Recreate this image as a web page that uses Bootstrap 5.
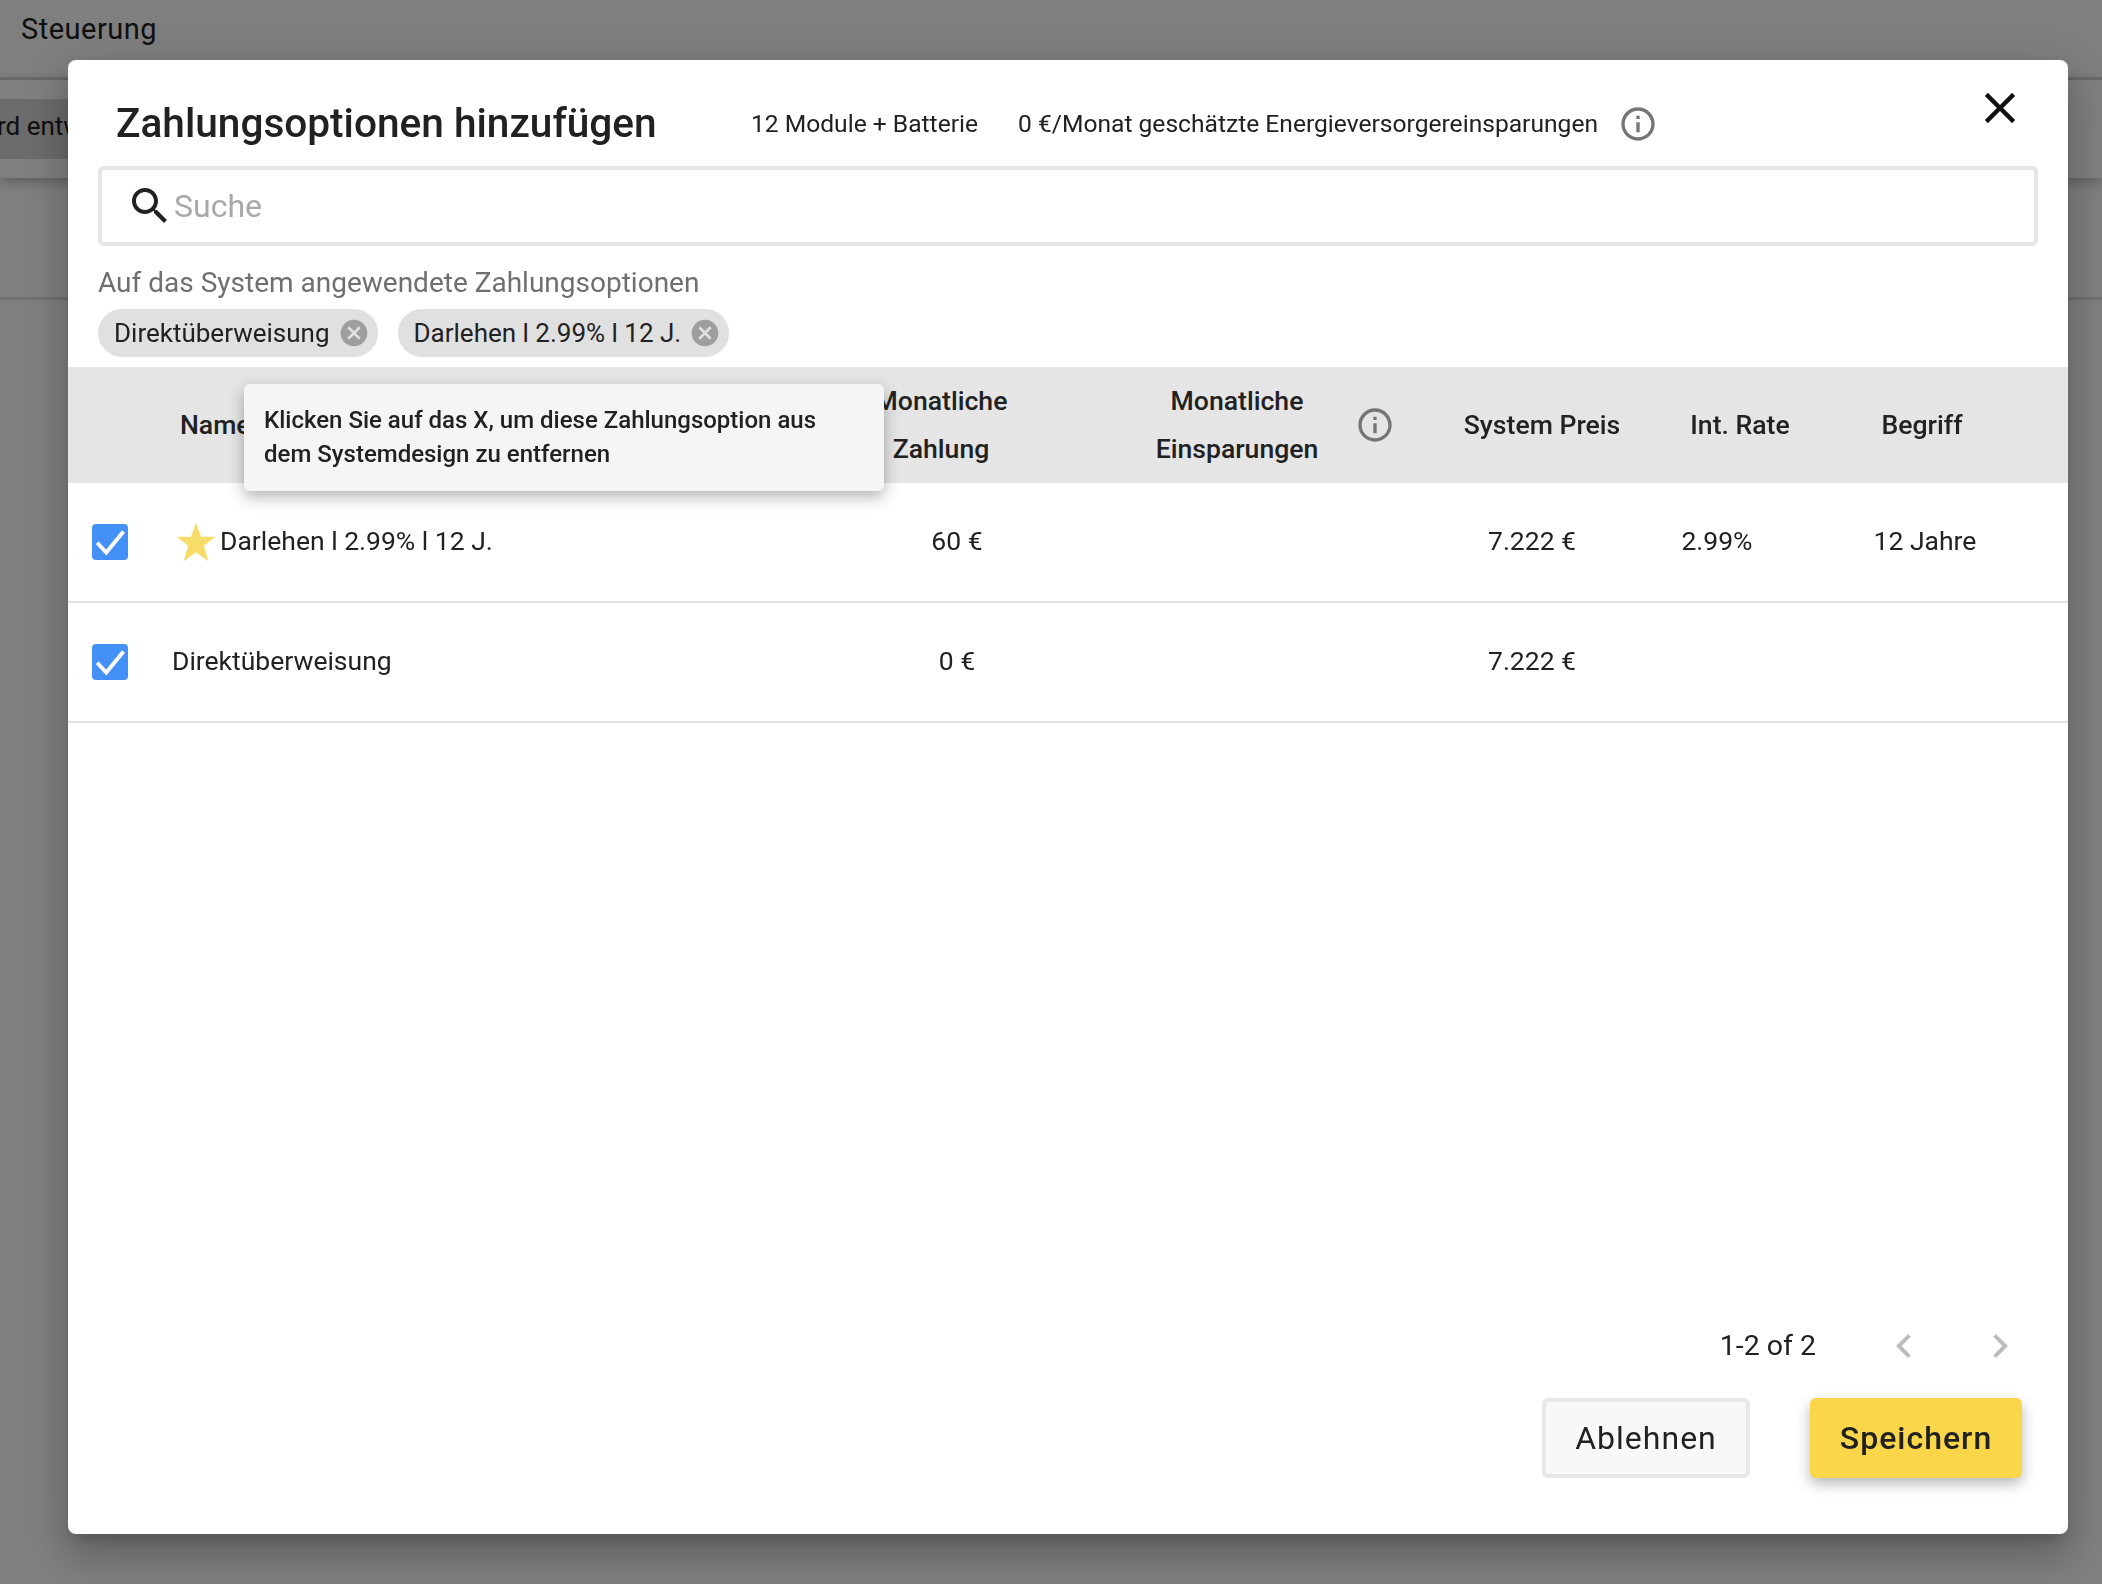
<!DOCTYPE html>
<html lang="de">
<head>
    <meta charset="UTF-8">
    <meta name="viewport" content="width=device-width, initial-scale=1.0">
    <title>Zahlungsoptionen</title>
    <link rel="stylesheet" href="https://cdn.jsdelivr.net/npm/bootstrap@5.3.0/dist/css/bootstrap.min.css">
    <style>
        html, body { height: 100%; }
        body {
            font-family: Roboto, "Liberation Sans", sans-serif;
            color: #212121;
            background: #fff;
            overflow: hidden;
        }
        /* page behind the dialog */
        .page-top { height: 80px; padding: 8px 21px; font-size: 29px; letter-spacing: .5px; border-bottom: 3px solid #e0e0e0; }
        .page-sub { height: 98px; padding-top: 19px; box-shadow: 0 3px 12px rgba(0,0,0,.3); }
        .page-band { width: 68px; height: 60px; background: #d8d8d8; padding-top: 8px; font-size: 26px; white-space: nowrap; text-indent: -3px; }
        .page-rule { margin-top: 119px; border-bottom: 3px solid #e0e0e0; }
        .dim-layer { background: rgba(0,0,0,.5); }

        /* dialog */
        .pay-dialog {
            left: 68px; top: 60px; width: 2000px; height: 1474px;
            background: #fff; border-radius: 8px;
            box-shadow: 0 11px 15px -7px rgba(0,0,0,.2), 0 24px 38px 3px rgba(0,0,0,.14), 0 9px 46px 8px rgba(0,0,0,.12);
        }
        .pay-head { height: 106px; padding: 20px 0 0 48px; }
        .pay-title { font-size: 40.6px; font-weight: 500; margin: 0; width: 635px; }
        .pay-meta { font-size: 24.6px; white-space: nowrap; padding-top: 2px; }
        .pay-meta-gap { margin-left: 40px; }
        .pay-meta-info { margin-left: 20px; margin-top: 2px; }
        .pay-close { top: 22px; right: 42px; width: 52px; height: 52px; }
        .search-wrap { margin: 0 30px; height: 80px; border: 4px solid #e6e6e6; border-radius: 6px; padding-left: 24px; }
        .search-wrap input { border: 0; outline: 0; font-size: 32px; padding: 0; background: transparent; }
        .search-wrap input::placeholder { color: #a8a8a8; }
        .applied-label { margin: 20px 30px 0; font-size: 28px; color: #6f6f6f; line-height: 34px; }
        .chip-row { margin: 9px 30px 0; gap: 20px; }
        .pay-chip { height: 48px; background: #e0e0e0; border-radius: 24px; padding: 0 8px 0 16px; font-size: 26px; color: #212121; gap: 8px; }
        .head-cols {
            height: 116px; margin-top: 10px; background: #e5e5e5; font-weight: 500; font-size: 26.6px; line-height: 48px;
            grid-template-columns: 700px 346px 246px 28px 296px 112px 252px;
        }
        .head-cols > div { white-space: nowrap; }
        .head-cols .name-cell { padding-left: 112px; }
        .head-info { padding-left: 2px; }
        .sys-head { padding-left: 12px; }
        .value-cols {
            height: 120px; font-size: 26.5px; border-bottom: 2px solid #e0e0e0;
            grid-template-columns: 700px 378px 302px 168px 202px 214px;
        }
        .value-cols > div:not(.name-cell), .name-cell span { padding-bottom: 2px; }
        .name-cell { white-space: nowrap; }
        .tick-box { width: 36px; height: 36px; border-radius: 4px; background: #4390f7; margin-left: 24px; }
        .row-star { margin-left: 48px; margin-right: 4px; width: 40px; height: 40px; }
        .plain-name { margin-left: 44px; }
        .hint-pop {
            left: 176px; top: 324px; width: 640px; height: 107px; padding: 19px 20px;
            background: #f5f5f5; border-radius: 6px; font-size: 24px; font-weight: 500; line-height: 34px;
            box-shadow: 0 6px 16px rgba(0,0,0,.3);
        }
        .pager { font-size: 28.5px; padding-right: 44px; margin-bottom: 28px; }
        .pager-arrow { width: 48px; height: 48px; }
        .pager-first { margin-left: 64px; }
        .foot-btns { padding: 0 46px 56px 0; gap: 60px; }
        .foot-btn { height: 80px; font-size: 32px; border-radius: 6px; letter-spacing: 1px; }
        .foot-decline { width: 208px; background: #f8f8f8; border: 4px solid #e8e8e8; color: #212121; }
        .foot-save { width: 212px; background: #fad74a; border: 0; font-weight: 500; color: #212121; box-shadow: 0 6px 14px rgba(0,0,0,.28); }
    </style>
</head>
<body>
    <svg width="0" height="0" class="position-absolute">
        <symbol id="i-info" viewBox="0 0 24 24"><path d="M11 7h2v2h-2zm0 4h2v6h-2zm1-9C6.48 2 2 6.48 2 12s4.48 10 10 10 10-4.48 10-10S17.52 2 12 2zm0 18c-4.41 0-8-3.59-8-8s3.59-8 8-8 8 3.59 8 8-3.59 8-8 8z"/></symbol>
        <symbol id="i-cancel" viewBox="0 0 24 24"><path d="M12 2C6.47 2 2 6.47 2 12s4.47 10 10 10 10-4.47 10-10S17.53 2 12 2zm5 13.59L15.59 17 12 13.41 8.41 17 7 15.59 10.59 12 7 8.41 8.41 7 12 10.59 15.59 7 17 8.41 13.41 12 17 15.59z"/></symbol>
        <symbol id="i-tick" viewBox="0 0 24 24"><path d="M3.5 12.5l6 6.5L21 5" fill="none" stroke="#fff" stroke-width="2.6"/></symbol>
    </svg>

    <div class="page-top">Steuerung</div>
    <div class="page-sub"><div class="page-band">rd entw</div></div>
    <div class="page-rule"></div>

    <div class="dim-layer position-fixed top-0 start-0 w-100 h-100"></div>

    <div class="pay-dialog position-fixed d-flex flex-column">
        <div class="pay-head d-flex align-items-center position-relative">
            <h1 class="pay-title">Zahlungsoptionen hinzufügen</h1>
            <span class="pay-meta">12 Module + Batterie</span>
            <span class="pay-meta pay-meta-gap">0 €/Monat geschätzte Energieversorgereinsparungen</span>
            <svg class="pay-meta-info" width="40" height="40" fill="#757575"><use href="#i-info"/></svg>
            <svg class="pay-close position-absolute" viewBox="0 0 24 24" fill="#111"><path d="M19 6.41L17.59 5 12 10.59 6.41 5 5 6.41 10.59 12 5 17.59 6.41 19 12 13.41 17.59 19 19 17.59 13.41 12z"/></svg>
        </div>

        <div class="search-wrap d-flex align-items-center">
            <svg width="48" height="48" viewBox="0 0 24 24" fill="#212121"><path d="M15.5 14h-.79l-.28-.27C15.41 12.59 16 11.11 16 9.5 16 5.91 13.09 3 9.5 3S3 5.91 3 9.5 5.91 16 9.5 16c1.61 0 3.09-.59 4.23-1.57l.27.28v.79l5 4.99L20.49 19l-4.99-5zm-6 0C7.01 14 5 11.99 5 9.5S7.01 5 9.5 5 14 7.01 14 9.5 11.99 14 9.5 14z"/></svg>
            <input class="flex-grow-1" type="text" placeholder="Suche">
        </div>

        <div class="applied-label">Auf das System angewendete Zahlungsoptionen</div>
        <div class="chip-row d-flex">
            <div class="pay-chip d-flex align-items-center">Direktüberweisung <svg width="32" height="32" fill="#9e9e9e"><use href="#i-cancel"/></svg></div>
            <div class="pay-chip d-flex align-items-center">Darlehen l 2.99% l 12 J. <svg width="32" height="32" fill="#9e9e9e"><use href="#i-cancel"/></svg></div>
        </div>

        <div class="head-cols d-grid align-items-center text-center">
            <div class="name-cell text-start">Name</div>
            <div>Monatliche<br>Zahlung</div>
            <div>Monatliche<br>Einsparungen</div>
            <div class="head-info d-flex justify-content-center"><svg class="flex-shrink-0" width="40" height="40" fill="#757575"><use href="#i-info"/></svg></div>
            <div class="sys-head">System Preis</div>
            <div>Int. Rate</div>
            <div>Begriff</div>
        </div>

        <div class="value-cols d-grid align-items-center text-center">
            <div class="name-cell d-flex align-items-center text-start">
                <div class="tick-box d-flex align-items-center justify-content-center"><svg width="36" height="36"><use href="#i-tick"/></svg></div>
                <svg class="row-star" viewBox="0 0 24 24" fill="#f8dc6a"><path d="M12 .5l3 8.3h8.6l-6.9 5.4 2.7 9.3L12 18.2l-7.4 5.3 2.7-9.3L.4 8.8H9z"/></svg>
                <span>Darlehen l 2.99% l 12 J.</span>
            </div>
            <div>60 €</div>
            <div></div>
            <div>7.222 €</div>
            <div>2.99%</div>
            <div>12 Jahre</div>
        </div>
        <div class="value-cols d-grid align-items-center text-center">
            <div class="name-cell d-flex align-items-center text-start">
                <div class="tick-box d-flex align-items-center justify-content-center"><svg width="36" height="36"><use href="#i-tick"/></svg></div>
                <span class="plain-name">Direktüberweisung</span>
            </div>
            <div>0 €</div>
            <div></div>
            <div>7.222 €</div>
            <div></div>
            <div></div>
        </div>

        <div class="pager d-flex align-items-center justify-content-end mt-auto">
            <span>1-2 of 2</span>
            <svg class="pager-arrow pager-first" viewBox="0 0 24 24" fill="#bdbdbd"><path d="M15.41 7.41L14 6l-6 6 6 6 1.41-1.41L10.83 12z"/></svg>
            <svg class="pager-arrow ms-5" viewBox="0 0 24 24" fill="#bdbdbd"><path d="M8.59 16.59L10 18l6-6-6-6-1.41 1.41L13.17 12z"/></svg>
        </div>
        <div class="foot-btns d-flex justify-content-end">
            <button class="btn foot-btn foot-decline">Ablehnen</button>
            <button class="btn foot-btn foot-save">Speichern</button>
        </div>

        <div class="hint-pop position-absolute">Klicken Sie auf das X, um diese Zahlungsoption aus dem Systemdesign zu entfernen</div>
    </div>
    <script src="https://cdn.jsdelivr.net/npm/bootstrap@5.3.0/dist/js/bootstrap.bundle.min.js"></script>
</body>
</html>
